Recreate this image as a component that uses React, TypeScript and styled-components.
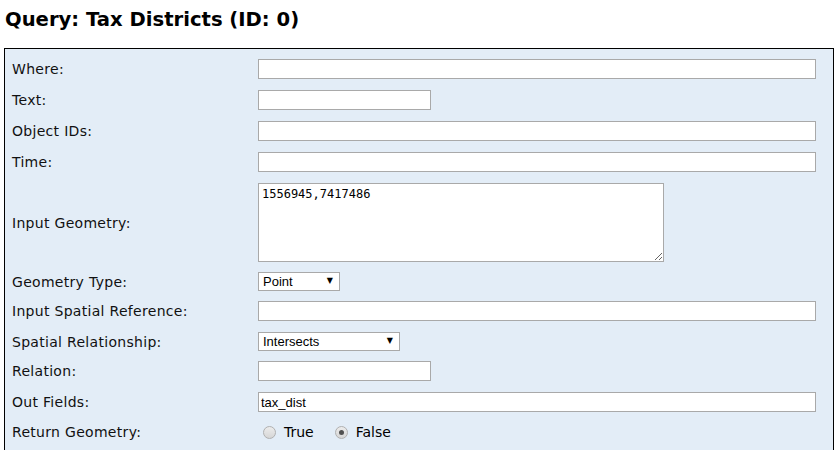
import styled, { createGlobalStyle } from "styled-components";

const GlobalStyle = createGlobalStyle`
  body {
    margin: 0;
    background: #ffffff;
    font-family: "DejaVu Sans", Verdana, sans-serif;
    color: #000000;
  }
`;

const Page = styled.div`
  padding: 0 5px 0 4px;
`;

const Heading = styled.h2`
  margin: 0;
  padding: 8px 0 0 1px;
  height: 48px;
  box-sizing: border-box;
  font-size: 19.6px;
  font-weight: bold;
`;

const Form = styled.div`
  width: 830px;
  box-sizing: border-box;
  border: 1px solid #000000;
  background: #e3edf7;
  display: flex;
  flex-direction: column;
  padding: 10px 17px 12px 7px;
`;

// one label + control line; $gap is the space below it
const Row = styled.div<{ $gap?: number }>`
  display: grid;
  grid-template-columns: 246px 1fr;
  align-items: center;
  margin-bottom: ${(p) => p.$gap ?? 11}px;
`;

const Label = styled.label`
  font-size: 14px;
  letter-spacing: 0.3px;
  color: #111111;
`;

const Field = styled.div`
  display: flex;
  align-items: center;
`;

const TextInput = styled.input<{ $w?: number }>`
  width: ${(p) => p.$w ?? 558}px;
  height: 20px;
  box-sizing: border-box;
  margin: 0;
  border: 1px solid #a9a9a9;
  background: #ffffff;
  padding: 1px 2px;
  font-family: "Liberation Sans", Arial, sans-serif;
  font-size: 13px;
  outline: none;
`;

const Area = styled.textarea`
  width: 406px;
  height: 79px;
  box-sizing: border-box;
  margin: 0;
  border: 1px solid #a9a9a9;
  padding: 3px 3px;
  font-family: "DejaVu Sans Mono", "Liberation Mono", monospace;
  font-size: 12px;
  line-height: 15px;
  outline: none;
  display: block;
`;

const SelectWrap = styled.span<{ $w: number }>`
  position: relative;
  display: inline-block;
  width: ${(p) => p.$w}px;
  height: 19px;
`;

const Select = styled.select`
  appearance: none;
  display: block;
  width: 100%;
  height: 19px;
  box-sizing: border-box;
  margin: 0;
  border: 1px solid #a9a9a9;
  border-radius: 0;
  background: #ffffff;
  padding: 0 0 0 4px;
  font-family: "Liberation Sans", Arial, sans-serif;
  font-size: 13px;
  color: #000000;
  outline: none;
`;

const Arrow = styled.span`
  position: absolute;
  right: 7px;
  top: 4px;
  font-size: 8px;
  line-height: 10px;
  pointer-events: none;
  font-family: "DejaVu Sans", sans-serif;
`;

const RadioGroup = styled.div`
  display: flex;
  align-items: center;
  height: 18px;
  padding-left: 5px;
  font-size: 14px;
`;

const RadioLabel = styled.label`
  display: inline-flex;
  align-items: center;
  margin-right: 21px;
`;

const Radio = styled.input`
  appearance: none;
  width: 13px;
  height: 13px;
  margin: 0 8px 0 0;
  border-radius: 50%;
  border: 1px solid #b0b0b0;
  background: linear-gradient(#ececec, #d6d6d6);
  box-sizing: border-box;
  position: relative;

  &:checked::after {
    content: "";
    position: absolute;
    left: 3px;
    top: 3px;
    width: 5px;
    height: 5px;
    border-radius: 50%;
    background: #505050;
  }
`;

type Line = { label: string; gap?: number; field: React.ReactNode };

export default function App() {
  const lines: Line[] = [
    { label: "Where:", field: <TextInput name="where" /> },
    { label: "Text:", field: <TextInput name="text" $w={173} /> },
    { label: "Object IDs:", field: <TextInput name="objectIds" /> },
    { label: "Time:", field: <TextInput name="time" /> },
    {
      label: "Input Geometry:",
      gap: 10,
      field: <Area name="geometry" defaultValue="1556945,7417486" />,
    },
    {
      label: "Geometry Type:",
      gap: 10,
      field: (
        <SelectWrap $w={82}>
          <Select name="geometryType" defaultValue="point">
            <option value="envelope">Envelope</option>
            <option value="point">Point</option>
            <option value="polyline">Polyline</option>
            <option value="polygon">Polygon</option>
            <option value="multipoint">Multipoint</option>
          </Select>
          <Arrow>▼</Arrow>
        </SelectWrap>
      ),
    },
    { label: "Input Spatial Reference:", field: <TextInput name="inSR" /> },
    {
      label: "Spatial Relationship:",
      gap: 10,
      field: (
        <SelectWrap $w={142}>
          <Select name="spatialRel" defaultValue="intersects">
            <option value="intersects">Intersects</option>
            <option value="contains">Contains</option>
            <option value="crosses">Crosses</option>
            <option value="touches">Touches</option>
            <option value="within">Within</option>
          </Select>
          <Arrow>▼</Arrow>
        </SelectWrap>
      ),
    },
    { label: "Relation:", field: <TextInput name="relationParam" $w={173} /> },
    {
      label: "Out Fields:",
      field: <TextInput name="outFields" defaultValue="tax_dist" />,
    },
    {
      label: "Return Geometry:",
      field: (
        <RadioGroup>
          <RadioLabel>
            <Radio type="radio" name="returnGeometry" value="true" />
            True
          </RadioLabel>
          <RadioLabel>
            <Radio type="radio" name="returnGeometry" value="false" defaultChecked />
            False
          </RadioLabel>
        </RadioGroup>
      ),
    },
  ];

  return (
    <Page>
      <GlobalStyle />
      <Heading>Query: Tax Districts (ID: 0)</Heading>
      <Form>
        {lines.map((l) => (
          <Row key={l.label} $gap={l.gap}>
            <Label>{l.label}</Label>
            <Field>{l.field}</Field>
          </Row>
        ))}
      </Form>
    </Page>
  );
}
